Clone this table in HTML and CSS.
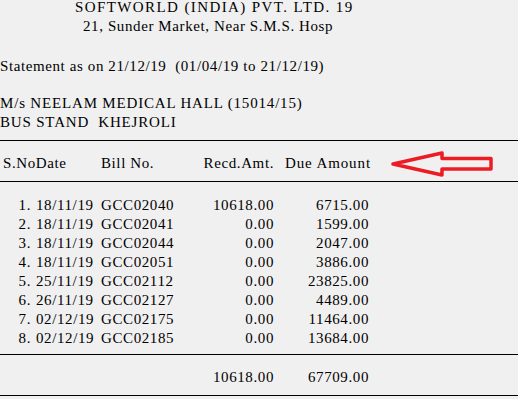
FILE: index.html
```html
<!DOCTYPE html>
<html>
<head>
<meta charset="utf-8">
<link rel="stylesheet" href="styles.css">
</head>
<body>
<div class="page">
  <div class="company">
    <div class="co-name">SOFTWORLD (INDIA) PVT. LTD. 19</div>
    <div class="co-addr">21, Sunder Market, Near S.M.S. Hosp</div>
  </div>
  <div class="statement">Statement as on 21/12/19&nbsp; (01/04/19 to 21/12/19)</div>
  <div class="party">
    <div>M/s NEELAM MEDICAL HALL (15014/15)</div>
    <div>BUS STAND&nbsp; KHEJROLI</div>
  </div>
  <div class="head-wrap">
    <div class="grid head">
      <div class="span2 left">S.NoDate</div>
      <div class="left">Bill No.</div>
      <div class="right">Recd.Amt.</div>
      <div class="right due">Due Amount</div>
    </div>
    <svg class="arrow" width="110" height="30" viewBox="0 0 110 30">
      <path d="M3 13 L52 2 L52 7.5 L101 7.5 L101 18 L52 18 L52 24 Z" fill="none" stroke="#ed1c24" stroke-width="3.5" stroke-linejoin="round"/>
    </svg>
  </div>
  <div class="rows">
    <div class="grid"><div class="right">1.</div><div class="date">18/11/19</div><div>GCC02040</div><div class="right">10618.00</div><div class="right">6715.00</div></div>
    <div class="grid"><div class="right">2.</div><div class="date">18/11/19</div><div>GCC02041</div><div class="right">0.00</div><div class="right">1599.00</div></div>
    <div class="grid"><div class="right">3.</div><div class="date">18/11/19</div><div>GCC02044</div><div class="right">0.00</div><div class="right">2047.00</div></div>
    <div class="grid"><div class="right">4.</div><div class="date">18/11/19</div><div>GCC02051</div><div class="right">0.00</div><div class="right">3886.00</div></div>
    <div class="grid"><div class="right">5.</div><div class="date">25/11/19</div><div>GCC02112</div><div class="right">0.00</div><div class="right">23825.00</div></div>
    <div class="grid"><div class="right">6.</div><div class="date">26/11/19</div><div>GCC02127</div><div class="right">0.00</div><div class="right">4489.00</div></div>
    <div class="grid"><div class="right">7.</div><div class="date">02/12/19</div><div>GCC02175</div><div class="right">0.00</div><div class="right">11464.00</div></div>
    <div class="grid"><div class="right">8.</div><div class="date">02/12/19</div><div>GCC02185</div><div class="right">0.00</div><div class="right">13684.00</div></div>
  </div>
  <div class="total">
    <div class="grid"><div></div><div></div><div></div><div class="right">10618.00</div><div class="right">67709.00</div></div>
  </div>
</div>
</body>
</html>
```
FILE: styles.css
```css
html, body {
  margin: 0;
  padding: 0;
  background: #f0f0f0;
}
.page {
  width: 518px;
  height: 399px;
  overflow: hidden;
  font-family: "Liberation Serif", "Times New Roman", serif;
  font-size: 15px;
  line-height: 19px;
  letter-spacing: 0.6px;
  color: #000;
}
.company {
  line-height: 15px;
}
.co-name {
  padding-left: 75px;
  letter-spacing: 1.4px;
}
.co-addr {
  padding-left: 83px;
  margin-top: 4px;
}
.statement {
  margin-top: 23px;
}
.party {
  margin-top: 18px;
  padding-bottom: 8px;
  border-bottom: 1px solid #000;
  letter-spacing: 0.82px;
}
.head-wrap {
  position: relative;
  padding: 13px 0 8px;
  border-bottom: 1px solid #000;
}
.arrow {
  position: absolute;
  left: 390px;
  top: 10px;
}
.grid {
  display: grid;
  grid-template-columns: 31px 70px 100px 73px 95px;
  white-space: nowrap;
}
.span2 {
  grid-column: span 2;
  padding-left: 3px;
}
.right {
  text-align: right;
}
.left {
  text-align: left;
}
.date {
  padding-left: 5px;
}
.head .due {
  letter-spacing: 0.9px;
  margin-right: -2px;
}
.rows {
  padding: 14px 0 6px;
  border-bottom: 1px solid #000;
}
.total {
  padding: 13px 0 8px;
  border-bottom: 1px solid #000;
}
```
